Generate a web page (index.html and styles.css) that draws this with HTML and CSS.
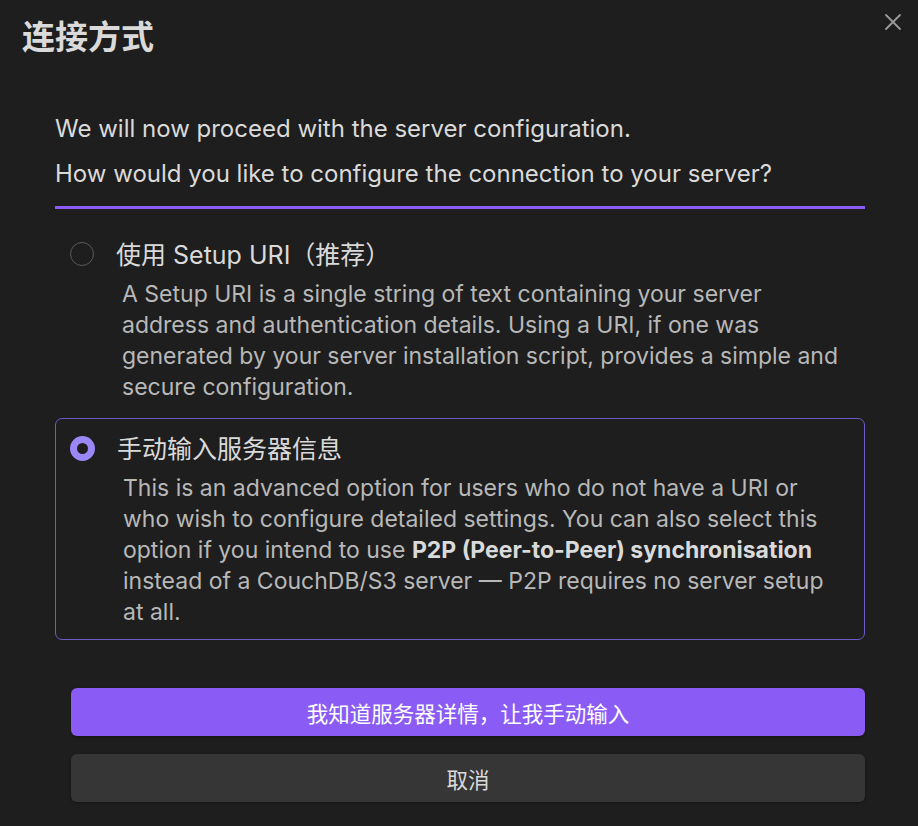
FILE: index.html
```html
<!DOCTYPE html>
<html lang="zh">
<head>
<meta charset="utf-8">
<title>连接方式</title>
<link rel="stylesheet" href="styles.css">
</head>
<body>
<div class="modal">
  <div class="modal-header">
    <h1 class="modal-title">连接方式</h1>
    <button class="modal-close" aria-label="关闭">
      <svg width="18" height="18" viewBox="0 0 18 18"><path d="M2 2 L16 16 M16 2 L2 16" stroke="currentColor" stroke-width="1.8" stroke-linecap="round"/></svg>
    </button>
  </div>
  <div class="modal-content">
    <p class="intro">We will now proceed with the server configuration.</p>
    <p class="intro question">How would you like to configure the connection to your server?</p>
    <div class="options">
      <label class="option">
        <span class="radio"></span>
        <span class="option-body">
          <span class="option-title">使用 Setup URI（推荐）</span>
          <span class="option-desc">A Setup URI is a single string of text containing your server address and authentication details. Using a URI, if one was generated by your server installation script, provides a simple and secure configuration.</span>
        </span>
      </label>
      <label class="option selected">
        <span class="radio checked"></span>
        <span class="option-body">
          <span class="option-title">手动输入服务器信息</span>
          <span class="option-desc">This is an advanced option for users who do not have a URI or who wish to configure detailed settings. You can also select this option if you intend to use <strong>P2P (Peer-to-Peer) synchronisation</strong> instead of a CouchDB/S3 server — P2P requires no server setup at all.</span>
        </span>
      </label>
    </div>
    <div class="actions">
      <button class="btn btn-primary">我知道服务器详情，让我手动输入</button>
      <button class="btn btn-secondary">取消</button>
    </div>
  </div>
</div>
</body>
</html>
```

FILE: styles.css
```css
html, body {
  margin: 0;
  padding: 0;
  background: #1e1e1e;
}

body {
  font-family: Inter, "Noto Sans CJK SC", sans-serif;
  color: #dadada;
  width: 918px;
  height: 826px;
  overflow: hidden;
}

.modal {
  padding: 0 53px 0 22px;
}

.modal-header {
  display: flex;
  justify-content: space-between;
  align-items: flex-start;
  margin-right: -53px;
}

.modal-title {
  margin: 17px 0 0;
  font-size: 33px;
  line-height: 40px;
  font-weight: 700;
  color: #dadada;
}

.modal-close {
  background: none;
  border: none;
  color: #9a9a9a;
  padding: 0;
  margin: 13px 16px 0 0;
  width: 18px;
  height: 18px;
  display: flex;
}

.modal-content {
  padding: 0 0 0 33px;
}

.intro {
  margin: 0;
  font-size: 24px;
  line-height: 31px;
  color: #dadada;
}

.intro:first-child {
  margin-top: 56px;
}

.question {
  margin-top: 14px;
  padding-bottom: 17px;
  border-bottom: 3px solid #8a5cf5;
}

.options {
  display: flex;
  flex-direction: column;
  gap: 3px;
  margin-top: 15px;
}

.option {
  display: flex;
  gap: 22px;
  padding: 16px 20px 11px 14px;
  border: 1px solid transparent;
  border-radius: 7px;
}

.option.selected {
  border-color: #6b5cc9;
}

.radio {
  flex: none;
  width: 24px;
  height: 24px;
  margin-top: 1px;
  box-sizing: border-box;
  border: 1.5px solid #5a5a5a;
  border-radius: 50%;
}

.radio.checked {
  width: 25px;
  height: 25px;
  border: 7.5px solid #9b87f5;
}

.option-body {
  display: flex;
  flex-direction: column;
}

.option-title {
  font-size: 25px;
  line-height: 28px;
  color: #dadada;
}

.option-desc {
  margin-top: 10px;
  padding-left: 6px;
  font-size: 23px;
  line-height: 31px;
  color: #b8b8b8;
}

.option-desc strong {
  color: #dadada;
  font-weight: 700;
}

.actions {
  display: flex;
  flex-direction: column;
  gap: 18px;
  margin-top: 48px;
  padding-left: 16px;
}

.btn {
  height: 48px;
  border: none;
  border-radius: 6px;
  font-family: Inter, "Noto Sans CJK SC", sans-serif;
  font-size: 21.5px;
  cursor: pointer;
}

.btn-primary {
  background: #8a5cf5;
  color: #ffffff;
  box-shadow: 0 1px 3px rgba(0, 0, 0, 0.35);
}

.btn-secondary {
  background: #363636;
  color: #dadada;
  box-shadow: 0 1px 3px rgba(0, 0, 0, 0.35);
}
```
